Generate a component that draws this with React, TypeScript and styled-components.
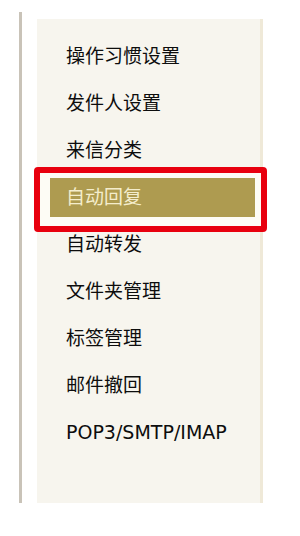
import React from "react";
import styled, { createGlobalStyle } from "styled-components";

const Global = createGlobalStyle`
  html, body { margin: 0; padding: 0; background: #ffffff; }
  body { font-family: "DejaVu Sans", "Noto Sans CJK SC", sans-serif; }
`;

const Page = styled.div`
  display: flex;
  align-items: flex-start;
  padding: 12px 0 0 19px;
  gap: 15px;
`;

const Rule = styled.div`
  width: 3px;
  height: 491px;
  background: #c9c3b8;
`;

const Panel = styled.nav`
  position: relative;
  z-index: 0;
  margin-top: 7px;
  width: 226px;
  height: 484px;
  box-sizing: border-box;
  background: #f7f5ee;
  border-right: 3px solid #efe9d8;
  padding-top: 18px;
  display: flex;
  flex-direction: column;
  gap: 8px;
`;

const Item = styled.div<{ $active?: boolean }>`
  position: relative;
  margin: 0 0 0 13px;
  width: 205px;
  height: 39px;
  box-sizing: border-box;
  padding-left: 16px;
  display: flex;
  align-items: center;
  font-size: 19px;
  line-height: 1;
  white-space: nowrap;
  color: ${(p) => (p.$active ? "#f4edcc" : "#0d0d0d")};
  background: ${(p) => (p.$active ? "#ae9b50" : "transparent")};

  ${(p) =>
    p.$active &&
    `
    &::before {
      content: "";
      position: absolute;
      z-index: -1;
      left: -16px;
      right: -12px;
      top: -11px;
      bottom: -15px;
      border: 6px solid #e8000e;
      border-radius: 4px;
      background: #fdfcf5;
    }
  `}
`;

const items = [
  "操作习惯设置",
  "发件人设置",
  "来信分类",
  "自动回复",
  "自动转发",
  "文件夹管理",
  "标签管理",
  "邮件撤回",
  "POP3/SMTP/IMAP",
];

export default function App() {
  return (
    <>
      <Global />
      <Page>
        <Rule />
        <Panel>
          {items.map((t, i) => (
            <Item key={t} $active={i === 3}>
              {t}
            </Item>
          ))}
        </Panel>
      </Page>
    </>
  );
}
